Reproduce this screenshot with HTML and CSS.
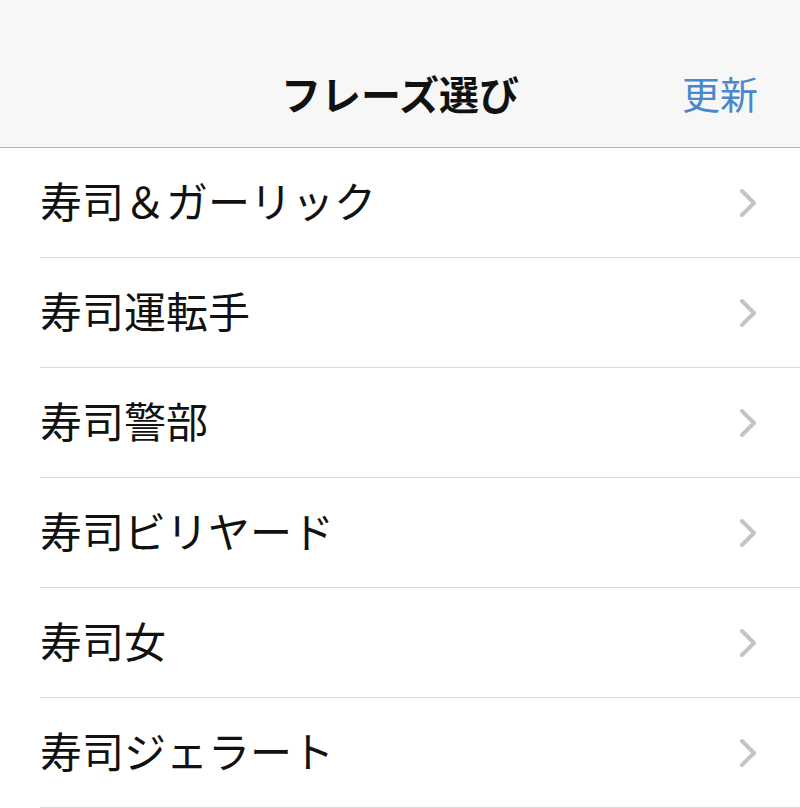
FILE: index.html
```html
<!DOCTYPE html>
<html lang="ja">

<head>
    <meta charset="UTF-8">
    <meta name="viewport" content="width=device-width, initial-scale=1.0">
    <title>フレーズ選び</title>
    <link rel="stylesheet" href="styles.css">
</head>

<body>
    <header class="nav">
        <div class="nav-bar">
            <h1 class="nav-title">フレーズ選び</h1>
            <a class="nav-action" href="#">更新</a>
        </div>
    </header>

    <!-- Phrase list -->
    <ul class="phrase-list">
        <li class="phrase-item"><span>寿司＆ガーリック</span>
            <svg class="chevron" viewBox="0 0 18 30"><path d="M3 3 L15 15 L3 27" /></svg>
        </li>
        <li class="phrase-item"><span>寿司運転手</span>
            <svg class="chevron" viewBox="0 0 18 30"><path d="M3 3 L15 15 L3 27" /></svg>
        </li>
        <li class="phrase-item"><span>寿司警部</span>
            <svg class="chevron" viewBox="0 0 18 30"><path d="M3 3 L15 15 L3 27" /></svg>
        </li>
        <li class="phrase-item"><span>寿司ビリヤード</span>
            <svg class="chevron" viewBox="0 0 18 30"><path d="M3 3 L15 15 L3 27" /></svg>
        </li>
        <li class="phrase-item"><span>寿司女</span>
            <svg class="chevron" viewBox="0 0 18 30"><path d="M3 3 L15 15 L3 27" /></svg>
        </li>
        <li class="phrase-item"><span>寿司ジェラート</span>
            <svg class="chevron" viewBox="0 0 18 30"><path d="M3 3 L15 15 L3 27" /></svg>
        </li>
    </ul>
</body>

</html>
```

FILE: styles.css
```css
body {
    margin: 0;
    font-family: "Noto Sans CJK JP", "Noto Sans", sans-serif;
    background-color: #fff;
    color: #111;
}

.nav {
    background-color: #f7f7f7;
    padding-top: 40px;
    border-bottom: 1px solid #b4b4b4;
}

.nav-bar {
    position: relative;
    height: 107px;
    display: flex;
    justify-content: center;
    align-items: center;
    padding-bottom: 2px;
    box-sizing: border-box;
}

.nav-title {
    margin: 0;
    font-size: 40px;
    font-weight: bold;
    color: #111;
}

.nav-action {
    position: absolute;
    right: 42px;
    top: 50%;
    transform: translateY(-52%);
    font-size: 38px;
    color: #4a88cc;
    text-decoration: none;
}

/* list rows */
.phrase-list {
    list-style: none;
    margin: 0;
    padding: 0 0 0 40px;
}

.phrase-item {
    height: 109px;
    display: flex;
    align-items: center;
    justify-content: space-between;
    padding-right: 43px;
    border-bottom: 1px solid #d9d9d9;
    font-size: 42px;
}

.phrase-item span {
    padding-bottom: 6px;
}

.chevron {
    width: 18px;
    height: 30px;
    fill: none;
    stroke: #c4c4c8;
    stroke-width: 4;
    stroke-linecap: round;
    stroke-linejoin: round;
}
```
